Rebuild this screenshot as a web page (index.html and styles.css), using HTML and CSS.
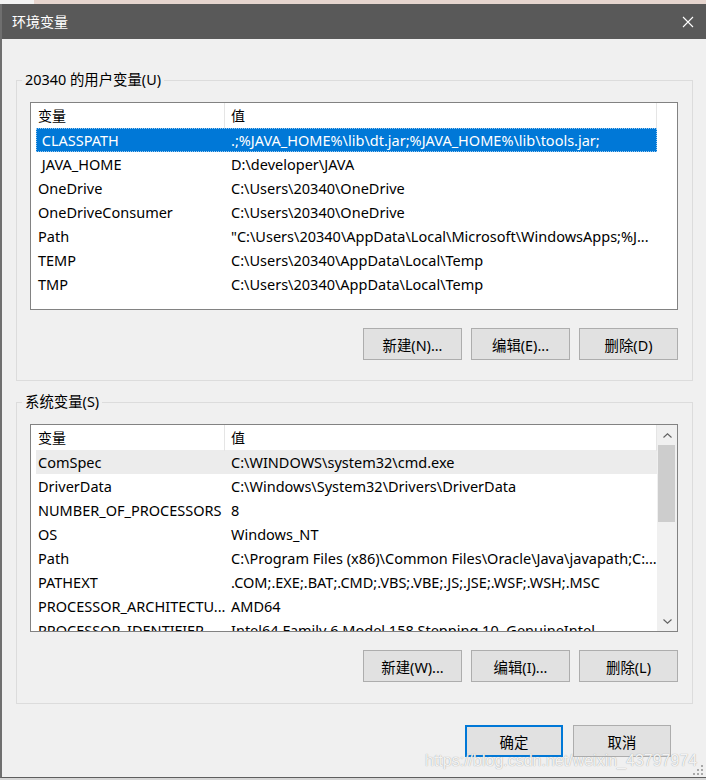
FILE: index.html
```html
<!DOCTYPE html>
<html lang="zh-CN">
<head>
<meta charset="utf-8">
<title>环境变量</title>
<link rel="stylesheet" href="styles.css">
</head>
<body>
<div class="desktop-strip"></div>
<div class="window">
  <div class="titlebar">
    <span class="title">环境变量</span>
    <span class="close"><svg width="12" height="12" viewBox="0 0 12 12"><path d="M1 1L11 11M11 1L1 11" stroke="#ffffff" stroke-width="1.1" fill="none"/></svg></span>
  </div>
  <div class="content">
    <fieldset class="group">
      <legend>20340 的用户变量(U)</legend>
      <div class="list">
        <div class="list-main">
          <div class="row header"><div class="cell c1">变量</div><div class="cell c2">值</div></div>
          <div class="row selected"><div class="cell c1"> CLASSPATH</div><div class="cell c2">.;%JAVA_HOME%\lib\dt.jar;%JAVA_HOME%\lib\tools.jar;</div></div>
          <div class="row"><div class="cell c1"> JAVA_HOME</div><div class="cell c2">D:\developer\JAVA</div></div>
          <div class="row"><div class="cell c1">OneDrive</div><div class="cell c2">C:\Users\20340\OneDrive</div></div>
          <div class="row"><div class="cell c1">OneDriveConsumer</div><div class="cell c2">C:\Users\20340\OneDrive</div></div>
          <div class="row"><div class="cell c1">Path</div><div class="cell c2">"C:\Users\20340\AppData\Local\Microsoft\WindowsApps;%J...</div></div>
          <div class="row"><div class="cell c1">TEMP</div><div class="cell c2">C:\Users\20340\AppData\Local\Temp</div></div>
          <div class="row"><div class="cell c1">TMP</div><div class="cell c2">C:\Users\20340\AppData\Local\Temp</div></div>
        </div>
        <div class="gutter"></div>
      </div>
      <div class="btn-row">
        <button class="btn">新建(N)...</button>
        <button class="btn">编辑(E)...</button>
        <button class="btn">删除(D)</button>
      </div>
    </fieldset>

    <fieldset class="group group-system">
      <legend>系统变量(S)</legend>
      <div class="list">
        <div class="list-main">
          <div class="row header"><div class="cell c1">变量</div><div class="cell c2">值</div></div>
          <div class="row hot"><div class="cell c1">ComSpec</div><div class="cell c2">C:\WINDOWS\system32\cmd.exe</div></div>
          <div class="row"><div class="cell c1">DriverData</div><div class="cell c2">C:\Windows\System32\Drivers\DriverData</div></div>
          <div class="row"><div class="cell c1">NUMBER_OF_PROCESSORS</div><div class="cell c2">8</div></div>
          <div class="row"><div class="cell c1">OS</div><div class="cell c2">Windows_NT</div></div>
          <div class="row"><div class="cell c1">Path</div><div class="cell c2">C:\Program Files (x86)\Common Files\Oracle\Java\javapath;C:...</div></div>
          <div class="row"><div class="cell c1">PATHEXT</div><div class="cell c2">.COM;.EXE;.BAT;.CMD;.VBS;.VBE;.JS;.JSE;.WSF;.WSH;.MSC</div></div>
          <div class="row"><div class="cell c1">PROCESSOR_ARCHITECTU...</div><div class="cell c2">AMD64</div></div>
          <div class="row"><div class="cell c1">PROCESSOR_IDENTIFIER</div><div class="cell c2">Intel64 Family 6 Model 158 Stepping 10, GenuineIntel</div></div>
        </div>
        <div class="scrollbar">
          <div class="sb-btn"><svg width="9" height="5" viewBox="0 0 9 5"><path d="M0.5 4.5L4.5 0.8L8.5 4.5" fill="none" stroke="#606060" stroke-width="1.1"/></svg></div>
          <div class="sb-track"><div class="sb-thumb"></div></div>
          <div class="sb-btn"><svg width="9" height="5" viewBox="0 0 9 5"><path d="M0.5 0.5L4.5 4.2L8.5 0.5" fill="none" stroke="#606060" stroke-width="1.1"/></svg></div>
        </div>
      </div>
      <div class="btn-row">
        <button class="btn">新建(W)...</button>
        <button class="btn">编辑(I)...</button>
        <button class="btn">删除(L)</button>
      </div>
    </fieldset>

    <div class="footer">
      <button class="btn default">确定</button>
      <button class="btn">取消</button>
    </div>
  </div>
  <span class="grip"><svg width="10" height="10" viewBox="0 0 10 10"><g fill="#a8a8a8"><rect x="8" y="0" width="2" height="2"/><rect x="4" y="4" width="2" height="2"/><rect x="8" y="4" width="2" height="2"/><rect x="0" y="8" width="2" height="2"/><rect x="4" y="8" width="2" height="2"/><rect x="8" y="8" width="2" height="2"/></g></svg></span>
</div>
<div class="watermark">https://blog.csdn.net/weixin_43797974</div>
</body>
</html>
```

FILE: styles.css
```css
* { box-sizing: border-box; }
html, body { margin: 0; padding: 0; }
body {
  width: 706px;
  height: 780px;
  background: #d6d6d6;
  font-family: "Noto Sans", "Noto Sans CJK SC", sans-serif;
  font-size: 14px;
  color: #000;
  position: relative;
  overflow: hidden;
}
.desktop-strip {
  height: 4px;
  background: linear-gradient(90deg, #f3f3f3 0, #f3f3f3 34px, #e6d5ce 34px, #e6d5ce 100%);
}
.window {
  position: relative;
  background: #f0f0f0;
  border-left: 2px solid #6f6f6f;
  border-bottom: 1px solid #5e5e5e;
}
.titlebar {
  height: 35px;
  background: #595959;
  color: #fff;
  display: flex;
  align-items: center;
  justify-content: space-between;
  padding: 0 12px 0 10px;
}
.title { font-size: 14px; line-height: 35px; }
.close { display: flex; width: 12px; height: 12px; }
.content { padding: 31px 13px 20px 14px; }

.group {
  margin: 0;
  width: 677px;
  min-width: 0;
  border: 1px solid #dcdcdc;
  padding: 12px 14px 20px 13px;
}
.group-system { margin-top: 11px; padding-bottom: 21px; }
.group legend {
  padding: 0 3px;
  margin-left: -8px;
  line-height: 20px;
  font-size: 14.4px;
}

.list {
  height: 208px;
  border: 1px solid #828282;
  background: #fff;
  display: flex;
  overflow: hidden;
}
.list-main { flex: 1; min-width: 0; overflow: hidden; }
.gutter { width: 20px; }

.row {
  display: grid;
  grid-template-columns: 189px 1fr;
  height: 24px;
  line-height: 24px;
  margin-left: 5px;
  white-space: pre;
  font-size: 14.5px;
}
.row.header { height: 25px; line-height: 26px; font-size: 14px; }
.cell { overflow: hidden; }
.c1 { padding-left: 2px; overflow: visible; }
.c2 { padding-left: 6px; }
.row.header .cell { border-right: 1px solid #e5e5e5; }
.row.selected {
  background: #0078d7;
  color: #fff;
  outline: 1px dotted #9ccaf0;
  outline-offset: -1px;
}
.row.hot { background: #ececec; }

.scrollbar {
  width: 20px;
  background: #f0f0f0;
  display: flex;
  flex-direction: column;
}
.sb-btn { height: 20px; display: flex; align-items: center; justify-content: center; }
.sb-track { flex: 1; }
.sb-thumb { height: 77px; margin: 0 2px 0 1px; background: #cdcdcd; }

.btn-row {
  display: flex;
  justify-content: flex-end;
  gap: 9px;
  margin-top: 18px;
}
.btn {
  width: 99px;
  height: 32px;
  padding: 0;
  border: 1px solid #adadad;
  background: #e1e1e1;
  color: #000;
  font-family: inherit;
  font-size: 14.4px;
  display: flex;
  align-items: center;
  justify-content: center;
}
.footer {
  display: flex;
  justify-content: flex-end;
  gap: 10px;
  margin-top: 21px;
  padding-right: 22px;
}
.footer .btn { width: 98px; }
.btn.default { border: 2px solid #0078d7; }

.grip { position: absolute; right: 3px; bottom: 2px; display: flex; }
.watermark {
  position: absolute;
  left: 425px;
  top: 752px;
  font-family: "Liberation Sans", Arial, sans-serif;
  font-size: 16px;
  line-height: 18px;
  color: rgba(255, 255, 255, 0.9);
  text-shadow: 0 0 1px #8c8c8c;
  white-space: nowrap;
}
```
